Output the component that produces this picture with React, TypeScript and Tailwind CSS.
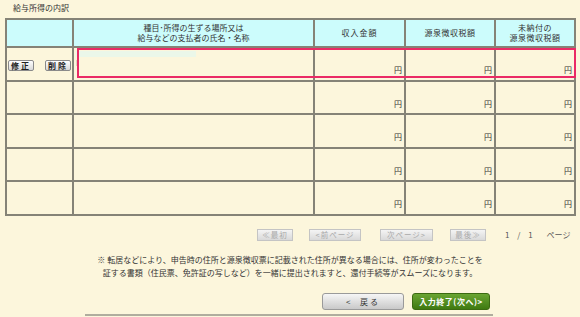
import React from "react";

const font = { fontFamily: '"Noto Sans CJK JP", "Noto Sans", sans-serif' };

function SmallButton({ label }: { label: string }) {
  return (
    <button className="h-[11px] w-[26px] rounded-[2px] border border-[#8a8a8a] bg-gradient-to-b from-white to-[#d8d8d8] text-[8px] font-bold leading-[9px] tracking-[2px] text-[#222]">
      {label}
    </button>
  );
}

function PageButton({ label, w, ml }: { label: string; w: string; ml: string }) {
  return (
    <div
      className={`${w} ${ml} flex h-[12px] items-center justify-center border border-[#c4c4c4] bg-gradient-to-b from-[#f4f4f4] to-[#d9d9d9] text-[7.5px] leading-none tracking-[1px] text-[#aaa]`}
    >
      {label}
    </div>
  );
}

const cell = "border-2 border-[#858377]";

export default function App() {
  const rows = [0, 1, 2, 3, 4];
  return (
    <div
      className="relative h-[317px] w-[580px] overflow-hidden bg-[#fcf6dc] text-[#333]"
      style={font}
    >
      <div className="pl-[13px] pt-[2px] text-[8px] leading-[12px]">給与所得の内訳</div>

      <table className="ml-[5px] mt-[4px] w-[569px] table-fixed border-collapse border-2 border-[#5e5c52] text-[8px]">
        <colgroup>
          <col className="w-[67px]" />
          <col className="w-[241px]" />
          <col className="w-[91px]" />
          <col className="w-[90px]" />
          <col className="w-[80px]" />
        </colgroup>
        <thead>
          <tr className="h-[28px] bg-[#ccfcfc] text-center text-[8px] leading-[10px]">
            <th className={`${cell} font-normal`}></th>
            <th className={`${cell} font-normal`}>
              種目･所得の生ずる場所又は
              <br />
              給与などの支払者の氏名・名称
            </th>
            <th className={`${cell} font-normal tracking-[1px]`}>収入金額</th>
            <th className={`${cell} font-normal tracking-[0.5px]`}>源泉徴収税額</th>
            <th className={`${cell} font-normal tracking-[0.5px]`}>
              未納付の
              <br />
              源泉徴収税額
            </th>
          </tr>
        </thead>
        <tbody>
          {rows.map((r) => (
            <tr key={r} className={r % 2 === 0 ? "h-[34px]" : "h-[33px]"}>
              <td className={`${cell} px-[1px]`}>
                {r === 0 && (
                  <div className="flex items-center justify-between pt-[2px]">
                    <SmallButton label="修正" />
                    <SmallButton label="削除" />
                  </div>
                )}
              </td>
              <td className={`${cell} align-top`}>
                {r === 0 && (
                  <div className="pl-[2px] pt-[3px]">
                    <div className="h-[6px] w-[120px] bg-[#e6f8ec] opacity-80" />
                    <div className="mt-[3px] h-[6px] w-[3px] bg-[#ddd6bc]" />
                  </div>
                )}
              </td>
              <td className={`${cell} pr-[2px] pt-[12px] text-right`}>円</td>
              <td className={`${cell} pr-[2px] pt-[12px] text-right`}>円</td>
              <td className={`${cell} pr-[2px] pt-[12px] text-right`}>円</td>
            </tr>
          ))}
        </tbody>
      </table>

      <div className="pointer-events-none absolute left-[77px] top-[48px] h-[30px] w-[499px] border-2 border-[#ea2a66]" />

      <div className="mt-[13px] flex items-center text-[8px]">
        <PageButton label="≪最初" w="w-[36px]" ml="ml-[257px]" />
        <PageButton label="<前ページ" w="w-[52px]" ml="ml-[16px]" />
        <PageButton label="次ページ>" w="w-[53px]" ml="ml-[19px]" />
        <PageButton label="最後≫" w="w-[36px]" ml="ml-[17px]" />
        <div className="ml-[19px] tracking-[3px] text-[#555]">1 / 1</div>
        <div className="ml-[11px] text-[#555]">ページ</div>
      </div>

      <div className="mt-[12px] text-center text-[8px] leading-[13px] text-[#333]">
        ※ 転居などにより、申告時の住所と源泉徴収票に記載された住所が異なる場合には、住所が変わったことを
        <br />
        証する書類（住民票、免許証の写しなど）を一緒に提出されますと、還付手続等がスムーズになります。
      </div>

      <div className="mt-[14px] flex">
        <button className="ml-[322px] flex h-[17px] w-[82px] items-center justify-center rounded-[3px] border border-[#9a9a9a] bg-gradient-to-b from-[#f6f6f6] to-[#c9c9c9] text-[8px] tracking-[2px] text-[#333]">
          &lt;&nbsp;&nbsp;戻る
        </button>
        <button className="ml-[8px] flex h-[17px] w-[78px] items-center justify-center rounded-[3px] border border-[#3c6a12] bg-gradient-to-b from-[#6aa532] to-[#3f7a10] text-[8px] font-bold tracking-[0.5px] text-white">
          入力終了(次へ)&gt;
        </button>
      </div>

      <div className="ml-[85px] mt-[4px] h-[2px] w-[408px] bg-[#b0ad9e]" />
    </div>
  );
}
